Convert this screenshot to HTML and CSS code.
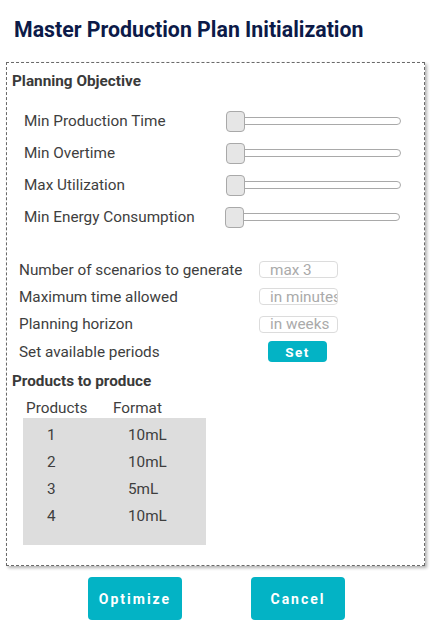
FILE: index.html
```html
<!DOCTYPE html>
<html>
<head>
<meta charset="utf-8">
<link rel="stylesheet" href="styles.css">
</head>
<body>
<h1 class="title">Master Production Plan Initialization</h1>
<div class="panel">
  <div class="section-title">Planning Objective</div>
  <div class="sliders">
    <div class="slider-row"><span class="label">Min Production Time</span><div class="slider"><div class="thumb"></div><div class="track"></div></div></div>
    <div class="slider-row"><span class="label">Min Overtime</span><div class="slider"><div class="thumb"></div><div class="track"></div></div></div>
    <div class="slider-row"><span class="label">Max Utilization</span><div class="slider"><div class="thumb"></div><div class="track"></div></div></div>
    <div class="slider-row"><span class="label">Min Energy Consumption</span><div class="slider shift"><div class="thumb"></div><div class="track"></div></div></div>
  </div>
  <div class="fields">
    <div class="field-row"><span class="label">Number of scenarios to generate</span><input class="input" type="text" placeholder="max 3"></div>
    <div class="field-row"><span class="label">Maximum time allowed</span><input class="input" type="text" placeholder="in minutes"></div>
    <div class="field-row"><span class="label">Planning horizon</span><input class="input" type="text" placeholder="in weeks"></div>
    <div class="field-row"><span class="label">Set available periods</span><button class="set-btn">Set</button></div>
  </div>
  <div class="section-title products-title">Products to produce</div>
  <div class="table">
    <div class="thead"><span class="col1">Products</span><span class="col2">Format</span></div>
    <div class="tbody">
      <div class="trow"><span class="c1">1</span><span class="c2">10mL</span></div>
      <div class="trow"><span class="c1">2</span><span class="c2">10mL</span></div>
      <div class="trow"><span class="c1">3</span><span class="c2">5mL</span></div>
      <div class="trow"><span class="c1">4</span><span class="c2">10mL</span></div>
    </div>
  </div>
</div>
<div class="actions">
  <button class="action-btn">Optimize</button>
  <button class="action-btn">Cancel</button>
</div>
</body>
</html>
```
FILE: styles.css
```css
* { box-sizing: border-box; }
html, body { margin: 0; padding: 0; background: #fff; }
body {
  width: 431px;
  height: 643px;
  font-family: Roboto, "Liberation Sans", sans-serif;
  color: #3c3c3c;
  overflow: hidden;
}
.title {
  margin: 0;
  padding: 16px 0 0 14px;
  height: 62px;
  font-size: 21.3px;
  line-height: 28px;
  font-weight: 700;
  color: #0c1a48;
}
.panel {
  margin: 0 0 0 6px;
  width: 419px;
  height: 504px;
  border: 1px dashed #6a6a6a;
  box-shadow: 2px 2px 3px rgba(0,0,0,0.3);
  padding: 9px 0 0 0;
}
.section-title {
  font-size: 15.3px;
  font-weight: 700;
  line-height: 18px;
  padding-left: 5px;
  color: #3a3a3a;
}
.sliders { margin-top: 15px; padding-left: 17px; }
.slider-row {
  display: flex;
  align-items: center;
  height: 32px;
}
.label { font-size: 15.3px; color: #3e3e3e; white-space: nowrap; }
.slider-row .label { width: 202px; }
.slider { display: flex; align-items: center; }
.slider.shift { margin-left: -1px; }
.thumb {
  width: 19px;
  height: 21px;
  border: 1px solid #a9a9a9;
  border-radius: 4px;
  background: #e6e6e6;
  position: relative;
  z-index: 1;
}
.track {
  width: 158px;
  height: 8px;
  margin-left: -2px;
  border: 1px solid #a9a9a9;
  border-radius: 0 4px 4px 0;
  background: #fff;
}
.fields { margin-top: 23px; padding-left: 12px; }
.field-row {
  display: flex;
  align-items: center;
  height: 27.3px;
}
.field-row .label { width: 240px; }
.input {
  width: 79px;
  height: 17px;
  margin: 0;
  border: 1px solid #dcdcdc;
  border-radius: 4px;
  font-family: Roboto, "Liberation Sans", sans-serif;
  font-size: 15.3px;
  line-height: 15px;
  color: #aaaaaa;
  padding: 0 0 0 10px;
  background: #fff;
  outline: none;
}
.input::placeholder { color: #aaaaaa; opacity: 1; }
.set-btn {
  margin-left: 9px;
  width: 59px;
  height: 21px;
  border: none;
  border-radius: 4px;
  background: #03b3c5;
  color: #fff;
  font-family: Roboto, "Liberation Sans", sans-serif;
  font-weight: 700;
  font-size: 13.5px;
  letter-spacing: 1.5px;
  padding: 0;
}
.products-title { margin-top: 7px; }
.table { margin-left: 16px; margin-top: 8px; }
.thead {
  display: flex;
  height: 19px;
  align-items: center;
  font-size: 15.3px;
  color: #3e3e3e;
}
.col1 { width: 90px; padding-left: 3px; }
.tbody {
  width: 183px;
  height: 127px;
  background: #dddddd;
  margin-top: 1px;
  padding-top: 3px;
}
.trow {
  display: flex;
  align-items: center;
  height: 27px;
  font-size: 15.3px;
  color: #3e3e3e;
}
.c1 { width: 105px; padding-left: 24px; }
.actions {
  display: flex;
  margin-top: 11px;
  padding-left: 88px;
  gap: 69px;
}
.action-btn {
  width: 94px;
  height: 43px;
  border: none;
  border-radius: 4px;
  background: #03b3c5;
  color: #fff;
  font-family: Roboto, "Liberation Sans", sans-serif;
  font-weight: 700;
  font-size: 14px;
  letter-spacing: 2px;
  padding: 0;
}
```
